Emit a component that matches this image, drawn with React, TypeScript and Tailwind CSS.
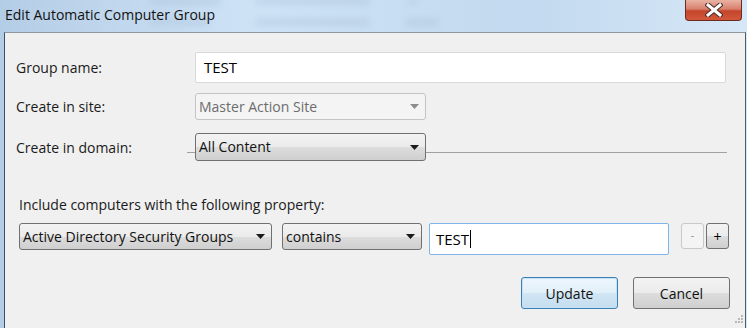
import React from "react";

const font = "font-['Open_Sans','Noto_Sans',sans-serif]";

function Arrow({ muted = false }: { muted?: boolean }) {
  return (
    <svg width="9" height="5" viewBox="0 0 9 5" className="flex-none">
      <path d="M0 0h9L4.5 5z" fill={muted ? "#8c8c8c" : "#1a1a1a"} />
    </svg>
  );
}

function Select({
  text,
  width,
  disabled = false,
}: {
  text: string;
  width: string;
  disabled?: boolean;
}) {
  return (
    <div
      className={`flex h-full items-center justify-between rounded-[3px] border pl-[3px] pr-[6px] ${width} ${
        disabled
          ? "border-[#c4c4c4] bg-[#f4f4f4] text-[#6d6d6d]"
          : "border-[#707070] bg-[linear-gradient(#f3f3f3_0%,#ebebeb_50%,#dddddd_50%,#cfcfcf_100%)] text-[#111]"
      }`}
    >
      <span className="whitespace-nowrap leading-[20px]">{text}</span>
      <Arrow muted={disabled} />
    </div>
  );
}

// faint smudges of the window that sits behind the glass title bar
const smudges = [
  "left-[150px] top-[-4px] w-[70px] h-[10px]",
  "left-[150px] top-[17px] w-[60px] h-[9px]",
  "left-[255px] top-[-4px] w-[115px] h-[10px]",
  "left-[255px] top-[17px] w-[115px] h-[10px]",
  "left-[408px] top-[-2px] w-[10px] h-[7px]",
  "left-[405px] top-[18px] w-[34px] h-[9px]",
];

export default function App() {
  return (
    <div
      className={`relative flex h-[328px] w-[747px] flex-col overflow-hidden bg-[linear-gradient(90deg,#b4cde6_0%,#cfe3f6_35%,#c2d9ef_70%,#d6e7f7_100%)] text-[14px] ${font}`}
    >
      {smudges.map((s, i) => (
        <div
          key={i}
          className={`pointer-events-none absolute rounded-[3px] bg-[#7f99b5] opacity-15 blur-[3px] ${s}`}
        />
      ))}

      <div className="relative flex h-[32px] flex-none items-start justify-between">
        <span className="pl-[5px] pt-[5px] text-[14px] leading-[20px] text-[#111]">
          Edit Automatic Computer Group
        </span>
        <div className="mr-[5px] flex h-[21px] w-[57px] items-center justify-center rounded-b-[4px] border border-t-0 border-[#6b2b20] bg-[linear-gradient(#eab3a5_0%,#d7806c_45%,#c4452b_55%,#d2583c_100%)]">
          <svg width="18" height="14" viewBox="0 0 18 14">
            <path d="M3 2l12 10M15 2L3 12" stroke="#4a2a26" strokeWidth="5" strokeLinecap="square" />
            <path d="M3 2l12 10M15 2L3 12" stroke="#ffffff" strokeWidth="3" strokeLinecap="square" />
          </svg>
        </div>
      </div>

      <div className="flex flex-1">
        <div className="w-[4px] flex-none" />
        <div className="flex flex-1 flex-col border-l border-r border-t border-l-[#3d4f63] border-r-[#4f5d6b] border-t-[#8e979f] bg-[#f0f0f0] pl-[11px] text-[#1a1a1a]">
          <div className="mt-[19px] flex h-[31px] items-center">
            <span className="w-[179px]">Group name:</span>
            <div className="flex h-full w-[531px] items-center rounded-[2px] border border-[#d9d9d9] bg-white pl-[8px] text-[15px] text-black">
              TEST
            </div>
          </div>

          <div className="mt-[10px] flex h-[27px] items-center">
            <span className="w-[179px]">Create in site:</span>
            <Select text="Master Action Site" width="w-[231px]" disabled />
          </div>

          <div className="mt-[13px] flex h-[28px] items-center">
            <span className="w-[171px]">Create in domain:</span>
            <div className="mt-[10px] h-px w-[8px] bg-[#a0a0a0]" />
            <Select text="All Content" width="w-[231px]" />
            <div className="mt-[10px] h-px w-[301px] bg-[#a0a0a0]" />
          </div>

          <div className="mt-[34px] pl-[3px] leading-[20px]">
            Include computers with the following property:
          </div>

          <div className="mt-[8px] flex items-start pl-[3px]">
            <div className="h-[27px]">
              <Select text="Active Directory Security Groups" width="w-[253px]" />
            </div>
            <div className="ml-[10px] h-[27px]">
              <Select text="contains" width="w-[140px]" />
            </div>
            <div className="ml-[7px] flex h-[32px] w-[240px] items-center rounded-[2px] border border-[#7eb4ea] bg-white pl-[6px] text-[15px] text-black">
              TEST
              <span className="ml-px h-[18px] w-px bg-black" />
            </div>
            <div className="ml-[12px] flex h-[26px] w-[23px] items-center justify-center rounded-[3px] border border-[#c8c8c8] bg-[#f4f4f4] text-[12px] text-[#a0a0a0]">
              -
            </div>
            <div className="ml-[2px] flex h-[26px] w-[23px] items-center justify-center rounded-[3px] border border-[#707070] bg-[linear-gradient(#f3f3f3_0%,#ebebeb_50%,#dddddd_50%,#cfcfcf_100%)] text-[14px] text-black">
              +
            </div>
          </div>

          <div className="mt-[22px] flex justify-end gap-[15px] pr-[15px]">
            <button className="flex h-[32px] w-[97px] items-center justify-center rounded-[3px] border border-[#3c7fb1] bg-[linear-gradient(#eef6fc_0%,#e1eff9_50%,#d2e6f4_50%,#c4ddef_100%)] text-[#111] shadow-[inset_0_0_0_1px_#c2e3f8]">
              Update
            </button>
            <button className="flex h-[32px] w-[97px] items-center justify-center rounded-[3px] border border-[#707070] bg-[linear-gradient(#f3f3f3_0%,#ebebeb_50%,#dddddd_50%,#cfcfcf_100%)] text-[#111]">
              Cancel
            </button>
          </div>

          <div className="flex justify-end pr-[2px] pt-[6px]">
            <svg width="10" height="10" viewBox="0 0 10 10">
              <g fill="#b8b8b8">
                <rect x="8" y="0" width="2" height="2" />
                <rect x="5" y="3" width="2" height="2" />
                <rect x="8" y="3" width="2" height="2" />
                <rect x="2" y="6" width="2" height="2" />
                <rect x="5" y="6" width="2" height="2" />
                <rect x="8" y="6" width="2" height="2" />
              </g>
            </svg>
          </div>
        </div>
        <div className="w-px flex-none" />
      </div>
    </div>
  );
}
